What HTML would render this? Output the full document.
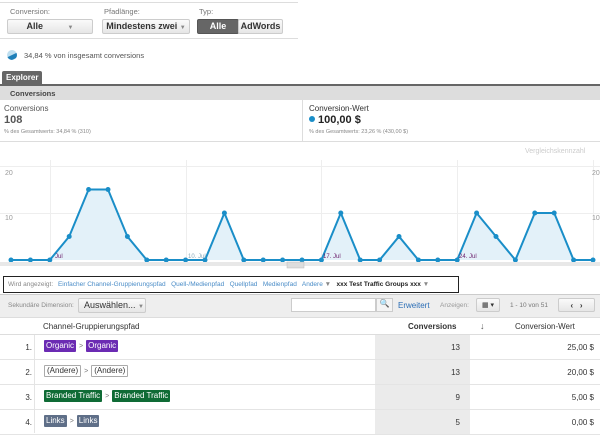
<!DOCTYPE html>
<html><head><meta charset="utf-8"><style>
*{margin:0;padding:0;box-sizing:border-box}
body{width:600px;height:433px;overflow:hidden;background:#fff;font-family:"Liberation Sans",Arial,sans-serif;position:relative;color:#333}
.a{position:absolute}
.lbl{font-size:7.5px;color:#777}
.btn{background:linear-gradient(#fafafa,#e6e6e6);border:1px solid #ccc;border-radius:2px;font-size:9px;font-weight:bold;color:#333;text-align:center;line-height:13px;white-space:nowrap}
.tag{display:inline-block;font-size:8px;padding:0 2px;line-height:12px;border-radius:1px;color:#fff;vertical-align:middle}
.row{position:absolute;left:0;width:600px;height:25px;border-bottom:1px solid #e4e4e4;font-size:8px}
.row .n{position:absolute;left:22px;top:8px;width:10px;text-align:right}
.row .p{position:absolute;left:44px;top:5px}
.row .c{position:absolute;left:375px;top:0;width:95px;height:24px;background:#ebebeb;text-align:right;padding:8px 10px 0 0;color:#333}
.row .v{position:absolute;right:6px;top:8px}
.sep{color:#777;font-size:7px;margin:0 3px;vertical-align:middle}
</style></head><body>
<div class="a" style="left:0;top:2px;width:298px;height:1px;background:#ddd"></div>
<div class="a lbl" style="left:10px;top:7px">Conversion:</div>
<div class="a lbl" style="left:104px;top:7px">Pfadlänge:</div>
<div class="a lbl" style="left:199px;top:7px">Typ:</div>
<div class="a btn" style="left:7px;top:19px;width:86px;height:15px">Alle <span style="color:#888;font-size:6px;margin-left:22px">▼</span></div>
<div class="a btn" style="left:102px;top:19px;width:88px;height:15px">Mindestens zwei <span style="color:#888;font-size:6px">▼</span></div>
<div class="a btn" style="left:197px;top:19px;width:42px;height:15px;background:#666;color:#fff;border-color:#555">Alle</div>
<div class="a btn" style="left:238px;top:19px;width:45px;height:15px">AdWords</div>
<div class="a" style="left:0;top:38px;width:298px;height:1px;background:#ddd"></div>
<div class="a" style="left:7px;top:50px;width:10px;height:10px;border-radius:50%;background:#bfdff0;overflow:hidden"><div style="position:absolute;left:0;top:5px;width:10px;height:5px;background:#1e7fb8;transform:skewY(-25deg)"></div></div>
<div class="a" style="left:24px;top:51px;font-size:7.5px;color:#555">34,84 % von insgesamt conversions</div>
<div class="a" style="left:2px;top:71px;width:40px;height:14px;background:#666;color:#fff;font-size:8px;font-weight:bold;padding:2px 0 0 4px;border-radius:2px 2px 0 0">Explorer</div>
<div class="a" style="left:0;top:84px;width:600px;height:2px;background:#666"></div>
<div class="a" style="left:0;top:86px;width:600px;height:14px;background:#ddd;font-size:7.5px;font-weight:bold;color:#444;padding:3px 0 0 10px">Conversions</div>
<div class="a" style="left:4px;top:104px;font-size:8px;color:#555">Conversions</div>
<div class="a" style="left:4px;top:114px;font-size:11px;font-weight:bold;color:#555">108</div>
<div class="a" style="left:4px;top:129px;font-size:5.5px;color:#888">% des Gesamtwerts: 34,84 % (310)</div>
<div class="a" style="left:302px;top:100px;width:1px;height:41px;background:#ddd"></div>
<div class="a" style="left:309px;top:104px;font-size:8px;color:#333">Conversion-Wert</div>
<div class="a" style="left:309px;top:114px;font-size:11px;font-weight:bold;color:#222"><span style="display:inline-block;width:6px;height:6px;border-radius:50%;background:#1a8ec8;margin-right:3px;vertical-align:1px"></span>100,00 $</div>
<div class="a" style="left:309px;top:129px;font-size:5.5px;color:#888">% des Gesamtwerts: 23,26 % (430,00 $)</div>
<div class="a" style="left:0;top:141px;width:600px;height:1px;background:#ddd"></div>
<div class="a" style="left:525px;top:148px;font-size:7px;color:#ccc">Vergleichskennzahl</div>
<svg class="a" style="left:0;top:142px" width="600" height="130" viewBox="0 142 600 130">
<g stroke="#eee" stroke-width="1">
<line x1="0" y1="166.5" x2="600" y2="166.5"/><line x1="0" y1="213.5" x2="600" y2="213.5"/>
<line x1="50.5" y1="160" x2="50.5" y2="262"/><line x1="186.5" y1="160" x2="186.5" y2="262"/><line x1="321.5" y1="160" x2="321.5" y2="262"/><line x1="457.5" y1="160" x2="457.5" y2="262"/><line x1="593.5" y1="160" x2="593.5" y2="262"/>
</g>
<text x="5" y="175" font-size="7" fill="#999">20</text><text x="5" y="220" font-size="7" fill="#999">10</text>
<text x="592" y="175" font-size="7" fill="#999">20</text><text x="592" y="220" font-size="7" fill="#999">10</text>
<polygon fill="#e3f1f9" points="11,260 30.4,260 49.8,260 69.2,236.5 88.6,189.5 108,189.5 127.4,236.5 146.8,260 166.2,260 185.6,260 205,260 224.4,213 243.8,260 263.2,260 282.6,260 302,260 321.4,260 340.8,213 360.2,260 379.6,260 399,236.5 418.4,260 437.8,260 457.2,260 476.6,213 496,236.5 515.4,260 534.8,213 554.2,213 573.6,260 593,260"/>
<polyline fill="none" stroke="#1a8ec8" stroke-width="2" points="11,260 30.4,260 49.8,260 69.2,236.5 88.6,189.5 108,189.5 127.4,236.5 146.8,260 166.2,260 185.6,260 205,260 224.4,213 243.8,260 263.2,260 282.6,260 302,260 321.4,260 340.8,213 360.2,260 379.6,260 399,236.5 418.4,260 437.8,260 457.2,260 476.6,213 496,236.5 515.4,260 534.8,213 554.2,213 573.6,260 593,260"/>
<g fill="#1a8ec8">
<circle cx="11" cy="260" r="2.5"/><circle cx="30.4" cy="260" r="2.5"/><circle cx="49.8" cy="260" r="2.5"/><circle cx="69.2" cy="236.5" r="2.5"/><circle cx="88.6" cy="189.5" r="2.5"/><circle cx="108" cy="189.5" r="2.5"/><circle cx="127.4" cy="236.5" r="2.5"/><circle cx="146.8" cy="260" r="2.5"/><circle cx="166.2" cy="260" r="2.5"/><circle cx="185.6" cy="260" r="2.5"/><circle cx="205" cy="260" r="2.5"/><circle cx="224.4" cy="213" r="2.5"/><circle cx="243.8" cy="260" r="2.5"/><circle cx="263.2" cy="260" r="2.5"/><circle cx="282.6" cy="260" r="2.5"/><circle cx="302" cy="260" r="2.5"/><circle cx="321.4" cy="260" r="2.5"/><circle cx="340.8" cy="213" r="2.5"/><circle cx="360.2" cy="260" r="2.5"/><circle cx="379.6" cy="260" r="2.5"/><circle cx="399" cy="236.5" r="2.5"/><circle cx="418.4" cy="260" r="2.5"/><circle cx="437.8" cy="260" r="2.5"/><circle cx="457.2" cy="260" r="2.5"/><circle cx="476.6" cy="213" r="2.5"/><circle cx="496" cy="236.5" r="2.5"/><circle cx="515.4" cy="260" r="2.5"/><circle cx="534.8" cy="213" r="2.5"/><circle cx="554.2" cy="213" r="2.5"/><circle cx="573.6" cy="260" r="2.5"/><circle cx="593" cy="260" r="2.5"/>
</g>
<text x="55" y="258" font-size="6" fill="#6a1b6a">Jul</text><text x="188" y="258" font-size="6" fill="#8ab">10. Jul</text><text x="323" y="258" font-size="6" fill="#6a1b6a">17. Jul</text><text x="459" y="258" font-size="6" fill="#6a1b6a">24. Jul</text>
<rect x="0" y="262" width="600" height="4" fill="#e8e8e8"/><rect x="287" y="262" width="17" height="6" fill="#ddd" stroke="#bbb" stroke-width="0.5"/>
</svg>
<div class="a" style="left:3px;top:276px;width:456px;height:17px;border:1.5px solid #222;font-size:6.5px;padding:4px 0 0 4px;color:#888;white-space:nowrap">Wird angezeigt: <span style="color:#4a8cc7;margin-left:3px">Einfacher Channel-Gruppierungspfad &nbsp; Quell-/Medienpfad &nbsp; Quellpfad &nbsp; Medienpfad &nbsp; Andere</span> ▼ &nbsp; <b style="color:#222">xxx Test Traffic Groups xxx</b> ▼</div>
<div class="a" style="left:0;top:294px;width:600px;height:24px;background:#eee;border-top:1px solid #ccc;border-bottom:1px solid #ddd"></div>
<div class="a" style="left:8px;top:302px;font-size:6.5px;color:#888">Sekundäre Dimension:</div>
<div class="a btn" style="left:78px;top:298px;width:68px;height:15px;font-weight:normal;font-size:9px;text-align:left;padding-left:5px">Auswählen... <span style="color:#888;font-size:6px">▼</span></div>
<div class="a" style="left:291px;top:298px;width:85px;height:14px;background:#fff;border:1px solid #ccc"></div>
<div class="a" style="left:376px;top:298px;width:17px;height:14px;background:#f4f4f4;border:1px solid #ccc;font-size:8px;text-align:center">&#x1F50D;</div>
<div class="a" style="left:398px;top:301px;font-size:8px;color:#2a6db5">Erweitert</div>
<div class="a" style="left:440px;top:302px;font-size:6.5px;color:#999">Anzeigen:</div>
<div class="a btn" style="left:476px;top:298px;width:24px;height:14px;font-weight:normal;font-size:7px">▦ ▾</div>
<div class="a" style="left:510px;top:302px;font-size:6.5px;color:#777">1 - 10 von 51</div>
<div class="a btn" style="left:558px;top:298px;width:37px;height:14px;font-size:8px">‹ &nbsp; ›</div>
<div class="a" style="left:0;top:318px;width:600px;height:17px;border-bottom:1px solid #ddd;font-size:8px"></div>
<div class="a" style="left:43px;top:322px;font-size:8px;color:#333">Channel-Gruppierungspfad</div>
<div class="a" style="left:408px;top:322px;font-size:8px;font-weight:bold;color:#333">Conversions</div>
<div class="a" style="left:480px;top:321px;font-size:9px;color:#555">↓</div>
<div class="a" style="left:515px;top:322px;font-size:8px;color:#333">Conversion-Wert</div>
<div class="a" style="left:34px;top:335px;width:1px;height:98px;background:#e4e4e4"></div>
<div class="row" style="top:335px"><div class="n">1.</div><div class="p"><span class="tag" style="background:#6b2bb3">Organic</span><span class="sep">&gt;</span><span class="tag" style="background:#6b2bb3">Organic</span></div><div class="c">13</div><div class="v">25,00 $</div></div>
<div class="row" style="top:360px"><div class="n">2.</div><div class="p"><span class="tag" style="color:#333;border:1px solid #aaa;line-height:10px">(Andere)</span><span class="sep">&gt;</span><span class="tag" style="color:#333;border:1px solid #aaa;line-height:10px">(Andere)</span></div><div class="c">13</div><div class="v">20,00 $</div></div>
<div class="row" style="top:385px"><div class="n">3.</div><div class="p"><span class="tag" style="background:#0f6b35">Branded Traffic</span><span class="sep">&gt;</span><span class="tag" style="background:#0f6b35">Branded Traffic</span></div><div class="c">9</div><div class="v">5,00 $</div></div>
<div class="row" style="top:410px"><div class="n">4.</div><div class="p"><span class="tag" style="background:#5f6f88">Links</span><span class="sep">&gt;</span><span class="tag" style="background:#5f6f88">Links</span></div><div class="c">5</div><div class="v">0,00 $</div></div>
</body></html>
